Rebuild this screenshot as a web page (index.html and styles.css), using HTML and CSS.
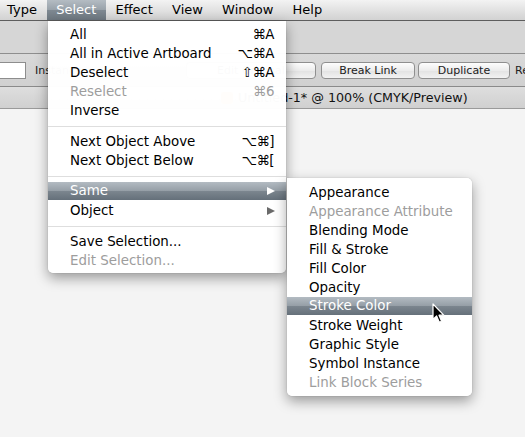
FILE: index.html
```html
<!DOCTYPE html>
<html>
<head>
<meta charset="utf-8">
<link rel="stylesheet" href="styles.css">
</head>
<body>
<div class="app">
  <div class="menubar">
    <span class="mb-item first">Type</span>
    <span class="mb-item active">Select</span>
    <span class="mb-item">Effect</span>
    <span class="mb-item">View</span>
    <span class="mb-item">Window</span>
    <span class="mb-item">Help</span>
  </div>
  <div class="toolbar"></div>
  <div class="controlbar">
    <div class="field"></div>
    <span class="label label-inst">Instance</span>
    <button class="btn btn-edit">Edit Original</button>
    <button class="btn btn-break">Break Link</button>
    <button class="btn btn-dup">Duplicate</button>
    <span class="label label-reset">Reset</span>
  </div>
  <div class="tabbar">
    <span class="doc-icon"></span>
    <span class="doc-title">Untitled-1* @ 100% (CMYK/Preview)</span>
  </div>
  <div class="canvas"></div>
</div>

<div class="menu main-menu">
  <div class="row"><span>All</span><span class="key">⌘A</span></div>
  <div class="row"><span>All in Active Artboard</span><span class="key">⌥⌘A</span></div>
  <div class="row"><span>Deselect</span><span class="key">⇧⌘A</span></div>
  <div class="row disabled"><span>Reselect</span><span class="key">⌘6</span></div>
  <div class="row"><span>Inverse</span></div>
  <div class="sep"></div>
  <div class="row"><span>Next Object Above</span><span class="key">⌥⌘]</span></div>
  <div class="row"><span>Next Object Below</span><span class="key">⌥⌘[</span></div>
  <div class="sep"></div>
  <div class="row hl"><span>Same</span><span class="arrow"></span></div>
  <div class="row"><span>Object</span><span class="arrow"></span></div>
  <div class="sep"></div>
  <div class="row"><span>Save Selection...</span></div>
  <div class="row disabled"><span>Edit Selection...</span></div>
</div>

<div class="menu sub-menu">
  <div class="row"><span>Appearance</span></div>
  <div class="row disabled"><span>Appearance Attribute</span></div>
  <div class="row"><span>Blending Mode</span></div>
  <div class="row"><span>Fill &amp; Stroke</span></div>
  <div class="row"><span>Fill Color</span></div>
  <div class="row"><span>Opacity</span></div>
  <div class="row hl"><span>Stroke Color</span></div>
  <div class="row"><span>Stroke Weight</span></div>
  <div class="row"><span>Graphic Style</span></div>
  <div class="row"><span>Symbol Instance</span></div>
  <div class="row disabled"><span>Link Block Series</span></div>
</div>

<svg class="cursor" width="14" height="22" viewBox="0 0 14 22">
  <path d="M1 1 L1 16.5 L4.6 13 L7.3 19.3 L9.6 18.3 L7 12.2 L11.8 12.2 Z" fill="#000" stroke="#fff" stroke-width="1.2" stroke-linejoin="round"/>
</svg>
</body>
</html>
```

FILE: styles.css
```css
html, body {
  margin: 0;
  padding: 0;
}
body {
  width: 525px;
  height: 437px;
  overflow: hidden;
  position: relative;
  font-family: "DejaVu Sans", "Noto Sans", sans-serif;
  background: #f4f4f4;
}
.app {
  display: flex;
  flex-direction: column;
  height: 437px;
}
.menubar {
  height: 20px;
  border-bottom: 1px solid #5e5e5e;
  background: linear-gradient(#f3f3f3, #e2e2e2 50%, #d2d2d2);
  display: flex;
  font-size: 13px;
  line-height: 20px;
  color: #000;
}
.mb-item {
  padding: 0 9.6px;
}
.mb-item.first {
  margin-left: -2.5px;
}
.mb-item.active {
  color: #fff;
  background: linear-gradient(#b4bcc3, #98a1a9 50%, #7e8891 51%, #6e7881);
}
.toolbar {
  height: 32px;
  background: #d6d6d6;
  border-bottom: 1px solid #8e8e8e;
}
.controlbar {
  height: 32px;
  background: linear-gradient(#d9d9d9, #d0d0d0);
  border-bottom: 1px solid #8a8a8a;
  display: flex;
  align-items: center;
  font-size: 11px;
  color: #222;
  white-space: nowrap;
  overflow: hidden;
}
.controlbar > * {
  flex: none;
}
.field {
  width: 25px;
  height: 15px;
  background: #fff;
  border: 1px solid #8d8d8d;
  border-left: none;
}
.label-inst {
  margin-left: 9px;
  width: 146px;
}
.label-reset {
  margin-left: 5px;
}
.btn {
  font-family: "DejaVu Sans", sans-serif;
  font-size: 11px;
  height: 17px;
  padding: 0;
  border: 1px solid #8f8f8f;
  border-radius: 4px;
  background: linear-gradient(#fdfdfd, #ececec 50%, #e2e2e2 51%, #f2f2f2);
  color: #222;
  line-height: 15px;
}
.btn-edit {
  width: 130px;
  margin-left: 5px;
}
.btn-break {
  width: 94px;
  margin-left: 5px;
}
.btn-dup {
  width: 92px;
  margin-left: 3px;
}
.tabbar {
  height: 21px;
  background: linear-gradient(#dedede, #d0d0d0);
  border-bottom: 1px solid #9a9a9a;
  display: flex;
  align-items: center;
  padding-left: 221px;
  font-size: 12.7px;
  color: #111;
  white-space: nowrap;
}
.doc-icon {
  width: 12px;
  height: 12px;
  border-radius: 3px;
  background: #f0a030;
  margin-right: 5px;
  flex: none;
}
.canvas {
  flex: 1;
  background: #f4f4f4;
}

.menu {
  position: absolute;
  background: rgba(255, 255, 255, 0.98);
  font-size: 13.4px;
  color: #000;
  box-shadow: 0 5px 13px rgba(0, 0, 0, 0.38), 0 0 1px rgba(0, 0, 0, 0.35);
}
.main-menu {
  left: 48px;
  top: 21px;
  width: 238px;
  padding: 4px 0 3px;
  border-radius: 0 0 5px 5px;
}
.sub-menu {
  left: 287px;
  top: 178px;
  width: 185px;
  padding: 5px 0 4px;
  border-radius: 0 5px 5px 5px;
}
.row {
  height: 19px;
  line-height: 20px;
  padding: 0 12px 0 22px;
  display: flex;
  justify-content: space-between;
  align-items: center;
  white-space: nowrap;
}
.row.disabled {
  color: #9d9d9d;
}
.row.hl {
  color: #fff;
  background: linear-gradient(#b3bbc2, #959ea6 50%, #7b858e 52%, #65707a);
  height: 18px;
  margin-bottom: 1px;
}
.key {
  letter-spacing: -0.5px;
}
.arrow {
  width: 0;
  height: 0;
  border-top: 4.5px solid transparent;
  border-bottom: 4.5px solid transparent;
  border-left: 8px solid #6a6a6a;
  margin-right: -1px;
}
.hl .arrow {
  border-left-color: #fff;
}
.sep {
  height: 12px;
  position: relative;
}
.sep::after {
  content: "";
  position: absolute;
  left: 0;
  right: 0;
  top: 6px;
  height: 1px;
  background: #dedede;
}
.cursor {
  position: absolute;
  left: 432px;
  top: 303px;
}
```
